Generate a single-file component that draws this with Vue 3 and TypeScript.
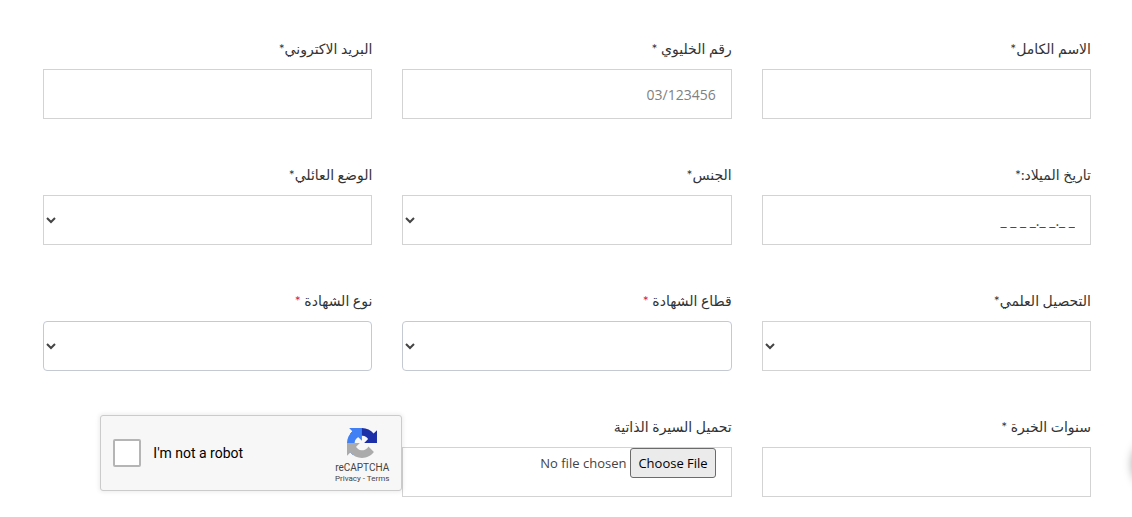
<script setup lang="ts">
import { ref } from 'vue'

type Kind = 'text' | 'select' | 'file'

interface Field {
  id: string
  label: string
  kind: Kind
  star?: 'plain' | 'spaced' | 'red'
  placeholder?: string
  rounded?: boolean
}

const fields: Field[] = [
  { id: 'name', label: 'الاسم الكامل', kind: 'text', star: 'plain' },
  { id: 'phone', label: 'رقم الخليوي', kind: 'text', star: 'spaced', placeholder: '03/123456' },
  { id: 'email', label: 'البريد الاكتروني', kind: 'text', star: 'plain' },
  { id: 'birth', label: 'تاريخ الميلاد:', kind: 'text', star: 'plain' },
  { id: 'gender', label: 'الجنس', kind: 'select', star: 'plain' },
  { id: 'status', label: 'الوضع العائلي', kind: 'select', star: 'plain' },
  { id: 'education', label: 'التحصيل العلمي', kind: 'select', star: 'plain' },
  { id: 'sector', label: 'قطاع الشهادة', kind: 'select', star: 'red', rounded: true },
  { id: 'degree', label: 'نوع الشهادة', kind: 'select', star: 'red', rounded: true },
  { id: 'experience', label: 'سنوات الخبرة', kind: 'text', star: 'spaced' },
  { id: 'cv', label: 'تحميل السيرة الذاتية', kind: 'file' },
]

const values = ref<Record<string, string>>({ birth: '_ _._ _._ _ _ _' })
const human = ref(false)
</script>

<template>
  <main class="page" dir="rtl" lang="ar">
    <form class="form" @submit.prevent>
      <div v-for="f in fields" :key="f.id" class="field">
        <label class="label" :for="f.id">{{ f.label }}<template v-if="f.star === 'plain'">*</template><template v-else-if="f.star === 'spaced'"> *</template><span v-else-if="f.star === 'red'" class="required"> *</span></label>
        <select v-if="f.kind === 'select'" :id="f.id" class="control select" :class="{ rounded: f.rounded }"></select>
        <input v-else-if="f.kind === 'file'" :id="f.id" class="control file" type="file" />
        <input v-else :id="f.id" v-model="values[f.id]" class="control" type="text" :placeholder="f.placeholder" />
      </div>

      <div class="captcha" dir="ltr" lang="en">
        <input id="human" v-model="human" class="tick" type="checkbox" />
        <label class="captcha-label" for="human">I'm not a robot</label>
        <div class="brand">
          <svg class="logo" viewBox="0 0 64 64" aria-hidden="true">
            <path fill="#1c2fa8" d="M64 31.955l-.033-1.37V4.687l-7.16 7.16C50.948 4.674 42.033.093 32.05.093c-10.4 0-19.622 4.96-25.458 12.64l11.736 11.86a15.55 15.55 0 0 1 4.754-5.334c2.05-1.6 4.952-2.906 8.968-2.906.485 0 .86.057 1.135.163 4.976.393 9.288 3.14 11.828 7.124l-8.307 8.307L64 31.953" />
            <path fill="#4080f4" d="M31.862.094l-1.37.033H4.594l7.16 7.16C4.58 13.147 0 22.06 0 32.046c0 10.4 4.96 19.622 12.64 25.458L24.5 45.768a15.55 15.55 0 0 1-5.334-4.754c-1.6-2.05-2.906-4.952-2.906-8.968 0-.485.057-.86.163-1.135.393-4.976 3.14-9.288 7.124-11.828l8.307 8.307L31.86.095" />
            <path fill="#ababab" d="M.001 32.045l.033 1.37v25.898l7.16-7.16c5.86 7.173 14.774 11.754 24.76 11.754 10.4 0 19.622-4.96 25.458-12.64l-11.736-11.86a15.55 15.55 0 0 1-4.754 5.334c-2.05 1.6-4.952 2.906-8.968 2.906-.485 0-.86-.057-1.135-.163-4.976-.393-9.288-3.14-11.828-7.124l8.307-8.307c-10.522.04-22.4.066-27.295-.005" />
          </svg>
          <span class="brand-name">reCAPTCHA</span>
          <span class="legal"><a href="#privacy">Privacy</a> - <a href="#terms">Terms</a></span>
        </div>
      </div>
    </form>
    <div class="float" aria-hidden="true"></div>
  </main>
</template>

<style>
body {
  margin: 0;
  background: #fff;
}
</style>

<style scoped>
.page {
  position: relative;
  box-sizing: border-box;
  min-height: 100vh;
  padding: 39px 41px 20px 43px;
  overflow: hidden;
  color: #333;
  font-family: "Open Sans", "DejaVu Sans", sans-serif;
  font-size: 14px;
}

.form {
  display: grid;
  grid-template-columns: repeat(3, minmax(0, 1fr));
  gap: 46px 30px;
  align-items: start;
}

.field {
  display: flex;
  flex-direction: column;
  gap: 10px;
}

.label {
  height: 20px;
  font-family: Lato, "DejaVu Sans", sans-serif;
  line-height: 20px;
  white-space: nowrap;
}

.required {
  color: #dc1437;
}

.control {
  box-sizing: border-box;
  width: 100%;
  height: 50px;
  margin: 0;
  padding: 0 15px;
  border: 1px solid #d3d3d3;
  border-radius: 0;
  outline: none;
  background-color: #fff;
  color: #444;
  font: inherit;
}

.control::placeholder {
  color: #808080;
  opacity: 1;
}

.select {
  padding: 0;
}

.rounded {
  border-color: #c4c9d2;
  border-radius: 4px;
}

.file {
  font-size: 13px;
}

.file::file-selector-button {
  box-sizing: border-box;
  height: 30px;
  margin: 0;
  margin-inline-end: 4px;
  padding: 0 7px;
  border: 1px solid #6b6b6b;
  border-radius: 3px;
  background: #ebebeb;
  color: #000;
  font: inherit;
}

.captcha {
  display: flex;
  align-items: center;
  justify-self: start;
  box-sizing: border-box;
  width: 302px;
  height: 76px;
  margin: -2px -30px 0 0;
  padding: 0 12px;
  border: 1px solid #cbcbcb;
  border-radius: 3px;
  background: #f7f7f7;
  box-shadow: 0 0 4px 1px rgba(0, 0, 0, 0.08);
  color: #000;
  font-family: Roboto, sans-serif;
}

.tick {
  appearance: none;
  box-sizing: border-box;
  width: 28px;
  height: 28px;
  margin: 0;
  border: 2px solid #b5b5b5;
  border-radius: 2px;
  background: #fff;
}

.tick:checked {
  background: #4080f4;
}

.captcha-label {
  flex: 1;
  padding-left: 12px;
}

.brand {
  display: flex;
  flex-direction: column;
  align-items: center;
  padding-top: 5px;
  color: #444;
}

.logo {
  width: 30px;
  height: 30px;
}

.brand-name {
  margin-top: 4px;
  font-size: 10px;
  line-height: 12px;
}

.legal {
  font-size: 8px;
  line-height: 10px;
}

.legal a {
  color: inherit;
  text-decoration: none;
}

.float {
  position: absolute;
  top: 434px;
  right: -60px;
  width: 60px;
  height: 60px;
  border-radius: 50%;
  box-shadow: 0 0 10px rgba(0, 0, 0, 0.35);
}
</style>
